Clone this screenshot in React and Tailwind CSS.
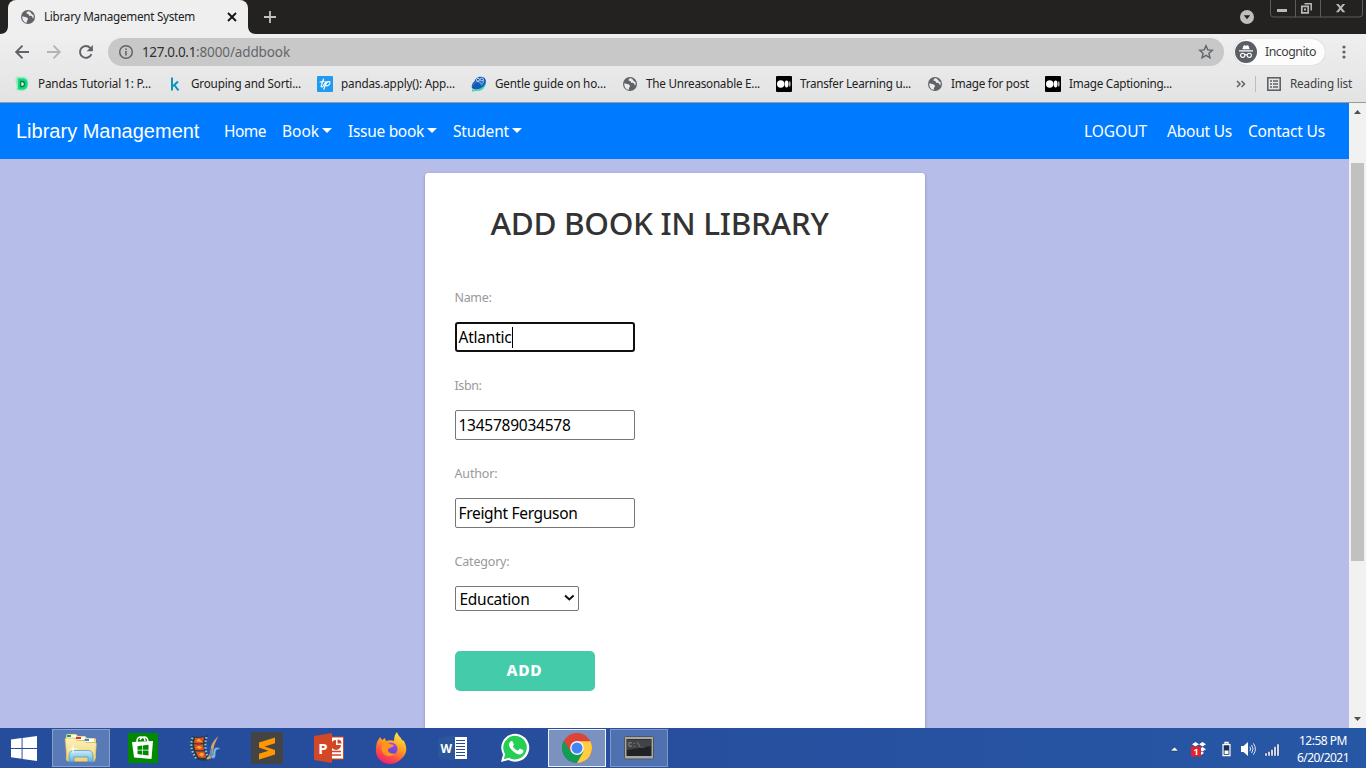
import React, { useLayoutEffect, useRef } from "react";

/* A single line of text whose tracking is tuned so that it fills a given width. */
function Fit({ w, children, className = "" }) {
  const box = useRef(null);
  useLayoutEffect(() => {
    const el = box.current;
    el.style.letterSpacing = "0px";
    const natural = el.getBoundingClientRect().width;
    el.style.letterSpacing = `${(w - natural) / String(children).length}px`;
  }, [w, children]);
  return (
    <span ref={box} className={`inline-block shrink-0 whitespace-nowrap ${className}`}>
      {children}
    </span>
  );
}

function Globe() {
  return (
    <svg width="16" height="16" viewBox="0 0 16 16" className="shrink-0">
      <circle cx="8" cy="8" r="7" fill="#5f6368" />
      <path d="M2.300 7.200 6 8.200c1.400.3 2 1 1.900 2-.1.900-.900 1-1 2l-.1 1.600C4 13.500 2 11 2.300 7.200Z" fill="#ececec" />
      <path d="M8.600 2.200c-1.600.4-2.300 1.200-2.100 2 .2.800 1.300.5 2 1 .6.500.2 1.200.9 1.600.8.400 1.700 0 2.400.5.800.6.500 1.800 1.400 2.200.5-1 .6-2.300.2-3.500l-1.600-.7-.6-1.400c-.6-.7-1.600-1.500-2.600-1.700Z" fill="#ececec" />
    </svg>
  );
}

function MediumIcon() {
  return (
    <svg width="16" height="16" viewBox="0 0 16 16" className="shrink-0">
      <rect width="16" height="16" rx="1" fill="#000" />
      <circle cx="4.700" cy="8" r="3.700" fill="#fff" />
      <ellipse cx="10.600" cy="8" rx="1.900" ry="3.400" fill="#fff" />
      <ellipse cx="13.800" cy="8" rx="0.800" ry="3" fill="#bbb" />
    </svg>
  );
}

function DatacampIcon() {
  return (
    <svg width="16" height="16" viewBox="0 0 16 16" className="shrink-0">
      <path d="M2 .8h7c4 0 5.700 3 5.300 7.500-.4 4.500-3 6.700-6.800 6.700L1.600 13.800 3 12 1.300 3.200 3 2.500Z" fill="#8eeabb" />
      <path d="M4 2.500h4.500c3.400 0 5 2.200 5 5.500s-1.600 5.500-5 5.500H4Z" fill="#10d67e" />
      <path d="M6.700 5.500h1.500c1.500 0 2.200.9 2.200 2.500s-.7 2.500-2.200 2.500H6.700Z" fill="#d9ffee" stroke="#0a7a4a" strokeWidth="1.300" />
    </svg>
  );
}

function KIcon() {
  return (
    <svg width="16" height="16" viewBox="0 0 16 16" className="shrink-0" fill="none" stroke="#1093bd" strokeWidth="2">
      <path d="M5 1.500v13M11 5.500 6 10.300M7.300 9l4.200 5.300" />
    </svg>
  );
}

function TpIcon() {
  return (
    <svg width="16" height="16" viewBox="0 0 16 16" className="shrink-0">
      <rect width="16" height="16" rx="1" fill="#1e9bf0" />
      <g fill="none" stroke="#fff" strokeWidth="1.100" strokeLinecap="round">
        <path d="M6.500 3 4.300 9.500c-.5 1.800.6 2 2 .4L9 5.500M3 6l4-.6" />
        <path d="M9.300 6 6.800 13.300M8.700 8.500c1-3 4.300-4 4.300-1.900 0 2-2.500 4-4.500 3" />
      </g>
    </svg>
  );
}

function BookGuideIcon() {
  return (
    <svg width="16" height="16" viewBox="0 0 16 16" className="shrink-0">
      <path d="M1 13c3 2 10 1 14-8 .5 6-4 10.500-8.500 9.800L1 15.600Z" fill="#2fdcb0" />
      <path d="M.8 11.500C.2 8.500 2.600 6 4 4.500c.5-3 5.500-5 9-3 2.500 2 2.500 5 0 8.200C9.500 13.500 3 15 .8 11.500Z" fill="#1359b5" />
      <path d="M1.500 9.500 5 5.500c2.500 0 5 2 5.500 4.500" fill="none" stroke="#3d86d6" strokeWidth="1" />
      <path d="M5.500 5.500c2-.5 4.500 1 5.500 3 1.500-1.500 2-3.500 1-5.500" fill="none" stroke="#8abdeb" strokeWidth="1" />
      <circle cx="7" cy="3.700" r="1.500" fill="#1359b5" stroke="#d5e8fa" strokeWidth=".9" />
      <circle cx="10.800" cy="3.500" r="1.500" fill="#1359b5" stroke="#d5e8fa" strokeWidth=".9" />
    </svg>
  );
}

const bookmarks = [
  { icon: DatacampIcon, label: "Pandas Tutorial 1: P...", w: 113 },
  { icon: KIcon, label: "Grouping and Sorti...", w: 110 },
  { icon: TpIcon, label: "pandas.apply(): App...", w: 114 },
  { icon: BookGuideIcon, label: "Gentle guide on ho...", w: 111 },
  { icon: Globe, label: "The Unreasonable E...", w: 114 },
  { icon: MediumIcon, label: "Transfer Learning u...", w: 111 },
  { icon: Globe, label: "Image for post", w: 78 },
  { icon: MediumIcon, label: "Image Captioning...", w: 103 },
];

function TabStrip() {
  return (
    <div className="flex h-[34px] shrink-0 items-start bg-[#242220]">
      <svg width="8" height="34" viewBox="0 0 8 34" className="shrink-0">
        <path d="M8 26v8H0c5 0 8-3 8-8Z" fill="#efefef" />
      </svg>
      <div className="flex h-[34px] w-[240px] items-center rounded-t-lg bg-[#efefef] pl-3">
        <Globe />
        <Fit w={151} className="ml-2 text-[11.700px] text-[#202124]">Library Management System</Fit>
        <svg width="10" height="10" viewBox="0 0 10 10" className="ml-8" stroke="#111" strokeWidth="1.800">
          <path d="m1 1 8 8M9 1 1 9" />
        </svg>
      </div>
      <svg width="8" height="34" viewBox="0 0 8 34" className="shrink-0">
        <path d="M0 26v8h8c-5 0-8-3-8-8Z" fill="#efefef" />
      </svg>
      <svg width="12" height="12" viewBox="0 0 12 12" className="ml-2 mt-[11px]" stroke="#c2c2c2" strokeWidth="1.800">
        <path d="M6 0v12M0 6h12" />
      </svg>
      <svg width="14" height="14" viewBox="0 0 14 14" className="ml-auto mt-[10px]">
        <circle cx="7" cy="7" r="7" fill="#bdbec0" />
        <path d="M3.800 5.300h6.400L7 9.300Z" fill="#242220" />
      </svg>
      <svg width="94" height="19" viewBox="0 0 94 19" className="ml-4 mr-[2px]">
        <path d="M.5 0v14q0 3 3 3h86q3 0 3-3V0M25.500 0v17M50.500 0v17" fill="none" stroke="#5d5c5a" />
        <path d="M7 9h10v3H7Z" fill="#b9b9b9" />
        <g fill="none" stroke="#b9b9b9">
          <path d="M34.500 3.800h6.700v6.700" strokeWidth="1.500" />
          <path d="M31.800 6.300h6.400v6.500h-6.400Z" strokeWidth="1.700" />
        </g>
        <path d="M34 8.500h2v2h-2Z" fill="#b9b9b9" />
        <path d="M66 4h2.600l2 2.400 2-2.400h2.600l-3.300 4 3.400 4.300h-2.700l-2-2.600-2 2.600h-2.700L69.300 8Z" fill="#b9b9b9" />
      </svg>
    </div>
  );
}

function Toolbar() {
  return (
    <div className="flex h-9 shrink-0 items-center pl-[14px]">
      <svg width="16" height="16" viewBox="0 0 16 16" fill="none" stroke="#5f6368" strokeWidth="1.900">
        <path d="M15 8H2.500M8.500 1.700 2.200 8l6.300 6.300" />
      </svg>
      <svg width="16" height="16" viewBox="0 0 16 16" fill="none" stroke="#b3b5b7" strokeWidth="1.900" className="ml-4">
        <path d="M1 8h12.500M7.500 1.700 13.800 8l-6.300 6.300" />
      </svg>
      <svg width="16" height="16" viewBox="0 0 16 16" className="ml-4">
        <path d="M13.400 10.100A5.900 5.900 0 1 1 12.300 4" fill="none" stroke="#5f6368" strokeWidth="1.900" />
        <path d="M14.900 1v6.300H8.600Z" fill="#5f6368" />
      </svg>
      <div className="ml-[14px] flex h-7 w-[1116px] items-center rounded-full bg-[#c8c8c8] pl-[10px] pr-[10px]">
        <svg width="16" height="16" viewBox="0 0 16 16" fill="none" stroke="#5f6368" strokeWidth="1.500">
          <circle cx="8" cy="8" r="6.300" />
          <path d="M8 7.100v4.400M8 4.400v1.700" strokeWidth="1.600" />
        </svg>
        <span className="ml-2 text-[13.500px] text-[#303134]"><Fit w={54}>127.0.0.1</Fit></span>
        <Fit w={94} className="text-[13.500px] text-[#63666a]">:8000/addbook</Fit>
        <svg width="16" height="16" viewBox="0 0 16 16" className="ml-auto" fill="none" stroke="#5f6368" strokeWidth="1.400">
          <path d="m8 1.700 1.800 4.200 4.600.4-3.500 3 1.100 4.500L8 11.400l-4 2.400 1.100-4.500-3.500-3 4.600-.4Z" />
        </svg>
      </div>
      <div className="ml-[10px] flex h-[26px] w-[91px] items-center rounded-full bg-[#fcfcfc] pl-px shadow-[0_0_1px_#aaa]">
        <svg width="22" height="22" viewBox="0 0 22 22">
          <circle cx="11" cy="11" r="11" fill="#5b5e64" />
          <path d="m7.300 8.300 1.200-3.600q.3-.6 1-.4l1.500.4 1.500-.4q.7-.2 1 .4l1.200 3.600ZM4 9.300h14v1.100H4Z" fill="#fff" />
          <g fill="none" stroke="#fff" strokeWidth="1.100">
            <circle cx="7.700" cy="14.300" r="2.100" />
            <circle cx="14.300" cy="14.300" r="2.100" />
            <path d="M9.800 14q1.200-.8 2.400 0" />
          </g>
        </svg>
        <Fit w={51} className="ml-2 text-[12.300px] text-[#3c4043]">Incognito</Fit>
      </div>
      <svg width="4" height="14" viewBox="0 0 4 14" className="ml-[17px]" fill="#5f6368">
        <circle cx="2" cy="2" r="1.600" />
        <circle cx="2" cy="7" r="1.600" />
        <circle cx="2" cy="12" r="1.600" />
      </svg>
    </div>
  );
}

function BookmarksBar() {
  return (
    <div className="flex h-[33px] shrink-0 items-center gap-4 border-b border-[#999] pb-[4px] pl-[14px] text-[11.700px] text-[#222]">
      {bookmarks.map(({ icon: Icon, label, w }) => (
        <div key={label} className="flex items-center gap-2">
          <Icon />
          <Fit w={w}>{label}</Fit>
        </div>
      ))}
      <div className="ml-12 flex items-center">
        <svg width="10" height="8" viewBox="0 0 10 8" fill="none" stroke="#5f6368" strokeWidth="1.500">
          <path d="m1 1 3 3-3 3M5.500 1l3 3-3 3" />
        </svg>
        <div className="ml-[9px] h-4 w-px bg-[#bdbdbd]" />
        <svg width="14" height="14" viewBox="0 0 14 14" className="ml-[11px]">
          <rect x=".8" y=".8" width="12.400" height="12.400" fill="none" stroke="#5f6368" strokeWidth="1.600" />
          <path d="M3 4h2M6 4h5M3 7h2M6 7h5M3 10h2M6 10h5" stroke="#5f6368" strokeWidth="1.500" />
        </svg>
        <Fit w={62} className="ml-[9px] text-[#3c4043]">Reading list</Fit>
      </div>
    </div>
  );
}

function Caret() {
  return (
    <svg width="10" height="5" viewBox="0 0 10 5" className="mb-[3px] ml-[3px]">
      <path d="M0 0h10L5 5Z" fill="#fff" />
    </svg>
  );
}

function SiteNav() {
  return (
    <nav className="flex h-14 items-center bg-[#007bff] pl-4 pr-6 pt-px text-[15.500px] text-white">
      <span className="w-[184px] whitespace-nowrap pb-px font-['Liberation_Sans',sans-serif] text-xl">Library Management</span>
      <Fit w={42} className="ml-6">Home</Fit>
      <div className="ml-4 flex items-center"><Fit w={37}>Book</Fit><Caret /></div>
      <div className="ml-4 flex items-center"><Fit w={76}>Issue book</Fit><Caret /></div>
      <div className="ml-4 flex items-center"><Fit w={56}>Student</Fit><Caret /></div>
      <Fit w={63} className="ml-auto">LOGOUT</Fit>
      <Fit w={65} className="ml-5">About Us</Fit>
      <Fit w={77} className="ml-4">Contact Us</Fit>
    </nav>
  );
}

function Field({ label, labelWidth, value, valueWidth, focused }) {
  return (
    <div className="h-[88px]">
      <div className="flex h-[27px] items-center text-[12.500px] text-[#999]"><Fit w={labelWidth}>{label}</Fit></div>
      <div
        className={
          focused
            ? "mt-[10px] flex h-[30px] w-[180px] items-center rounded-[3px] border-2 border-[#101010] pl-[2px] text-[15.500px] text-black"
            : "mt-[10px] flex h-[30px] w-[180px] items-center rounded-[2px] border border-[#767676] pl-[3px] text-[15.500px] text-black"
        }
      >
        <Fit w={valueWidth} className="pt-[2px]">{value}</Fit>
        {focused && <div className="h-[21px] w-px bg-black" />}
      </div>
    </div>
  );
}

function BookForm() {
  return (
    <div className="mx-auto mt-[14px] h-[555px] w-[500px] rounded-t-[3px] bg-white px-[30px] shadow-[0_1px_3px_rgba(0,0,0,0.3)]">
      <div className="flex h-[99px] items-center pl-9 text-[31.500px] font-medium text-[#333]">
        <Fit w={338}>ADD BOOK IN LIBRARY</Fit>
      </div>
      <div className="pt-[13px]">
        <Field label="Name:" labelWidth={37} value="Atlantic" valueWidth={53} focused />
        <Field label="Isbn:" labelWidth={27} value="1345789034578" valueWidth={112} />
        <Field label="Author:" labelWidth={43} value="Freight Ferguson" valueWidth={119} />
        <div className="flex h-[27px] items-center text-[12.500px] text-[#999]"><Fit w={55}>Category:</Fit></div>
        <div className="mt-[10px] flex h-[25px] w-[124px] items-center rounded-[2px] border border-[#767676] pl-[4px] pr-[3px] text-[15.500px] text-black">
          <Fit w={70} className="pt-[3px]">Education</Fit>
          <svg width="11" height="8" viewBox="0 0 11 8" className="mb-[1px] ml-auto" fill="none" stroke="#111" strokeWidth="2">
            <path d="m1 1.500 4.300 4 4.300-4" />
          </svg>
        </div>
      </div>
      <button className="mt-10 flex h-10 w-[140px] items-center justify-center rounded-[5px] bg-[#43cbaa] text-[15.500px] font-extrabold text-white">
        <Fit w={36}>ADD</Fit>
      </button>
    </div>
  );
}

function Scrollbar() {
  return (
    <div className="flex w-[17px] shrink-0 flex-col items-center bg-[#f1f1f1]">
      <svg width="17" height="17" viewBox="0 0 17 17"><path d="M5 11h7L8.500 7Z" fill="#505050" /></svg>
      <div className="mt-[43px] h-[398px] w-[13px] bg-[#c1c1c1]" />
      <svg width="17" height="17" viewBox="0 0 17 17" className="mt-auto"><path d="M5 6h7l-3.500 4Z" fill="#505050" /></svg>
    </div>
  );
}

function ExplorerIcon() {
  return (
    <svg width="34" height="32" viewBox="0 0 34 32">
      <defs>
        <linearGradient id="folder" x1="0" y1="0" x2="0" y2="1"><stop offset="0" stopColor="#fff1b8" /><stop offset="1" stopColor="#ecd27c" /></linearGradient>
        <linearGradient id="stand" x1="0" y1="0" x2="0" y2="1"><stop offset="0" stopColor="#cbeefa" /><stop offset="1" stopColor="#5fb1dc" /></linearGradient>
      </defs>
      <path d="M2 27V4q0-2 2-2h8l2 2h7l2 2h7q2 0 2 2v18l-3 3H3Z" fill="#f1d98c" />
      <path d="M3 3h9v3H3Z" fill="#fff" /><path d="M3 3h4v2H3Z" fill="#14a34b" />
      <path d="M12 5h9v3h-9Z" fill="#fff" /><path d="M12 5h5v2h-5Z" fill="#d33a2b" />
      <path d="M20 7h10v3H20Z" fill="#fff" /><path d="M20.500 7h4.500v2h-4.500Z" fill="#2c8ede" />
      <path d="M1 7q0-1 1-1h9l2 2.500h7l2 2h9q1.500 0 1.500 1.500L31 28q0 1.500-1.500 1.500h-25Q3 29.500 3 28Z" fill="url(#folder)" stroke="#c9a94b" strokeWidth=".6" />
      <path d="M5 30v-6q0-5.500 5-5.500h14q5 0 5 5.500v6h-5v-5H10v5Z" fill="url(#stand)" stroke="#4b97bf" strokeWidth=".7" />
      <path d="m9 12 .8 4.200L14 17l-4.200.8L9 22l-.8-4.200L4 17l4.200-.8Z" fill="#fff" />
    </svg>
  );
}

function StoreIcon() {
  return (
    <svg width="30" height="30" viewBox="0 0 30 30">
      <rect width="30" height="30" fill="#008a00" />
      <path d="M9 12V8q0-4 4-4t4 4M12 7q1-3 4-3 4 0 4 5" fill="none" stroke="#fff" strokeWidth="1.500" />
      <path d="m4 9 21-1-1.500 18L6 24.500Z" fill="#fff" />
      <path d="m9.500 13.200 4.500-.6v4.200H9.500Zm5.200-.7 5.800-.8v5.100h-5.800Zm-5.200 5h4.500v4.200l-4.500-.6Zm5.200 0h5.800v5l-5.800-.7Z" fill="#008a00" />
    </svg>
  );
}

function MovieIcon() {
  return (
    <svg width="32" height="28" viewBox="0 0 32 28">
      <path d="M2.500 2C9 3.500 14 3 19 1c-3 8-2.500 17 2 25-5 1-10 1-15-1C1 17 0 9 2.500 2Z" fill="#25384c" />
      <path d="M3.500 3.500C1 11 2.500 17 7 24.500" fill="none" stroke="#7fbde8" strokeWidth="2.200" strokeDasharray="1.800 1.600" />
      <path d="M17.500 3c-2 8-1.500 15 2.500 22" fill="none" stroke="#7fbde8" strokeWidth="2.200" strokeDasharray="1.800 1.600" />
      <path d="M6 3.700q4.500.6 9-.4L14 9q-4.500.8-9 0Zm-1 6.500q4.500.8 9 0L14.800 16q-4.300.8-8.800-.3Zm1.500 7q4.500.8 8.700 0l2 6.300q-4 1-8-.5Z" fill="#e9501b" />
      <path d="m7 7 3-2.500L13 8Zm0 6.500 3-1.500 3 1-2 2Zm2.500 7L13 18.500l2 2-2 2Z" fill="#ffb030" />
      <path d="M17 25c4 1.500 7-1.500 7.500-8C24.500 10 28 6.500 29 2c-3 4-7 7-7.500 14-.2 4-1.500 7-4.500 9Z" fill="#d4a763" />
      <path d="M21.500 15c-1.500 7 1.500 11 4 9 2-2 .5-6 2-8 1-1.200 2-.8 3.500-.5-.5-3-5.500-3-6.500.8-.7 3-.4 5-1.300 5.200-1 0-1.300-3-.2-6.500Z" fill="#80b8e8" stroke="#2d62a5" strokeWidth=".6" />
    </svg>
  );
}

function PowerPointIcon() {
  return (
    <svg width="30" height="30" viewBox="0 0 30 30">
      <path d="M17 4h12.500v22H17Z" fill="#fff" stroke="#d24726" />
      <path d="M22 7v5h5a5 5 0 1 1-5-5Z" fill="#d24726" />
      <path d="M23.500 6.500q4 0 4 4h-4Z" fill="#d24726" />
      <path d="M17 18.500h10M17 22h10" stroke="#d24726" strokeWidth="1.500" />
      <path d="m0 3 18-3v30L0 27Z" fill="#d24726" />
      <text x="4.300" y="20.500" fill="#fff" fontSize="15" fontWeight="700" fontFamily="Noto Sans, sans-serif">P</text>
    </svg>
  );
}

function FirefoxIcon() {
  return (
    <svg width="32" height="32" viewBox="0 0 32 32">
      <defs>
        <linearGradient id="fox" x1=".8" y1="0" x2=".3" y2="1"><stop offset="0" stopColor="#fff04a" /><stop offset=".45" stopColor="#ff9a1f" /><stop offset=".75" stopColor="#ff4b4a" /><stop offset="1" stopColor="#ed2171" /></linearGradient>
        <linearGradient id="orb" x1="0" y1="0" x2="0" y2="1"><stop offset="0" stopColor="#a948e6" /><stop offset="1" stopColor="#5447d7" /></linearGradient>
      </defs>
      <path d="M2 10 5 5l2 3 3-2 1 3c3-1 6-1 8 0 0-4 1-7 3-9 1 4 4 5 5 8l2 1c3 6 3 11 0 15C20 36 6 33 2 24 0 19 1 14 2 10Z" fill="url(#fox)" />
      <circle cx="16" cy="17" r="6.500" fill="url(#orb)" />
      <path d="M5 12c4-2 7-2 10 0l4 1c-1 3-4 2-6 4-1 3 4 6 8 4-4 5-12 4-14-2-1-3 0-5 1-6Z" fill="#ff941f" />
    </svg>
  );
}

function WordIcon() {
  return (
    <svg width="30" height="28" viewBox="0 0 30 28">
      <path d="m0 4 18-3v26L0 24Z" fill="#2b579a" />
      <path d="M17 3h12v22H17Z" fill="#fff" />
      <path d="M18 6.500h9M18 9.500h9M18 12.500h9M18 15.500h9M18 18.500h9M18 21.500h9" stroke="#264d94" strokeWidth="1.100" />
      <text x="2.500" y="18.500" fill="#fff" fontSize="13" fontWeight="700" fontFamily="Noto Sans, sans-serif" textLength="11.500" lengthAdjust="spacingAndGlyphs">W</text>
    </svg>
  );
}

function WhatsAppIcon() {
  return (
    <svg width="30" height="30" viewBox="0 0 30 30">
      <path d="m1 29 2-7.500A14 14 0 1 1 8.500 27Z" fill="#fff" />
      <path d="m3.800 26.200 1.400-5A11.800 11.800 0 1 1 9 24.800Z" fill="#25cf54" />
      <path d="M10.500 8.500c1-.9 2-.5 2.400.5l.9 2.200c.2.700-.2 1.200-1 2 1.500 2.500 2.800 3.600 5 4.500l1.500-1.700c.5-.5 1-.4 1.600-.1l2.200 1.200c1 .7-.2 3.300-1.500 3.900-2 1-5.200 0-8-2.200-3-2.500-4.800-5.400-4.700-7.500q.1-1.700 1.600-2.800Z" fill="#fff" />
    </svg>
  );
}

function ChromeIcon() {
  return (
    <svg width="30" height="30" viewBox="0 0 30 30">
      <circle cx="15" cy="15" r="15" fill="#db4437" />
      <path d="M2 7.500A15 15 0 0 0 15 30l6.500-11.300L8.500 18.800Z" fill="#0f9d58" />
      <path d="M15 8.300h13.400A15 15 0 0 1 15 30l6.500-11.300Z" fill="#ffcd40" />
      <circle cx="15" cy="15" r="6.900" fill="#f6f6f6" />
      <circle cx="15" cy="15" r="5.500" fill="#4285f4" />
    </svg>
  );
}

function TerminalIcon() {
  return (
    <svg width="30" height="24" viewBox="0 0 30 24">
      <rect x=".5" y=".5" width="29" height="22.500" rx="1" fill="#a7a7a7" stroke="#555" />
      <rect x="2.500" y="3" width="25" height="17" fill="#202326" />
      <path d="M3 3.500h24V10L3 14Z" fill="#414447" />
      <text x="4" y="10.500" fontSize="7" fontWeight="700" fill="#858585" fontFamily="Liberation Mono, monospace">C:\_</text>
      <path d="M24 21.500h2" stroke="#3fc0ff" />
    </svg>
  );
}

function SublimeIcon() {
  return (
    <svg width="32" height="32" viewBox="0 0 32 32">
      <rect width="32" height="32" rx="1.500" fill="#444" />
      <path d="m8 10.500 16-5v5.700L13.500 14.500 24 18v4.500L8 27.500v-5.700l9.500-3L8 15.500Z" fill="#ff9800" />
    </svg>
  );
}

const apps = [
  { id: "explorer", Icon: ExplorerIcon, frame: "border border-[#8aa0cb] bg-[#587ab7]" },
  { id: "store", Icon: StoreIcon, frame: "" },
  { id: "movie", Icon: MovieIcon, frame: "" },
  { id: "sublime", Icon: SublimeIcon, frame: "" },
  { id: "powerpoint", Icon: PowerPointIcon, frame: "" },
  { id: "firefox", Icon: FirefoxIcon, frame: "" },
  { id: "word", Icon: WordIcon, frame: "" },
  { id: "whatsapp", Icon: WhatsAppIcon, frame: "" },
  { id: "chrome", Icon: ChromeIcon, frame: "border border-[#eef2f8] bg-[#7b91bf]" },
  { id: "terminal", Icon: TerminalIcon, frame: "border border-[#7f98c8] bg-[#4f71b0]" },
];

function Tray() {
  return (
    <div className="ml-auto flex items-center pr-[17px] pt-[2px] text-white">
      <svg width="9" height="6" viewBox="0 0 9 6"><path d="M.5 5 4.500 1l4 4Z" fill="#fff" stroke="#14305f" strokeWidth=".6" /></svg>
      <svg width="16" height="16" viewBox="0 0 16 16" className="ml-[12px]">
        <path d="m4.500 1 3.500 2.300L4.500 5.500 1 3.300Zm7 0L15 3.300l-3.500 2.200L8 3.300Zm0 5L15 8.200l-3.500 2.300L8 8.200Zm-3.500 6 3 -1.500 2 1.500-3 2Z" fill="#fff" />
        <rect y="5.500" width="10" height="10" fill="#e8202a" />
        <text x="2.500" y="14" fontSize="9" fontWeight="700" fill="#fff" fontFamily="Noto Sans, sans-serif">1</text>
      </svg>
      <svg width="11" height="16" viewBox="0 0 11 16" className="ml-[14px]">
        <rect x="1" y="2" width="9" height="13" rx="1" fill="#14305f" />
        <path d="M2 3.500h7v11H2ZM4 1.500h3v2H4Z" fill="none" stroke="#fff" strokeWidth="1.300" />
        <path d="M3.500 9.500h4v3.500h-4Z" fill="#fff" />
      </svg>
      <svg width="16" height="16" viewBox="0 0 16 16" className="ml-[8px]">
        <path d="M1 5h2.500L8 1v14l-4.500-4H1Z" fill="#fff" />
        <path d="M9.800 5.800q1.700 2.200 0 4.400M11.600 4q3 4 0 8M13.300 2.300q4.200 5.700 0 11.400" fill="none" stroke="#dce5f3" />
      </svg>
      <svg width="16" height="13" viewBox="0 0 16 13" className="ml-2">
        <path d="M1 10h2v3H1Zm3-1.500h2V13H4Zm3-2h2V13H7Zm3-3h2V13h-2ZM13 1h2v12h-2Z" fill="#fff" stroke="#14305f" strokeWidth=".4" />
      </svg>
      <div className="ml-[17px] flex flex-col items-center text-[12px] leading-[17px]">
        <Fit w={48}>12:58 PM</Fit>
        <Fit w={52}>6/20/2021</Fit>
      </div>
    </div>
  );
}

function Taskbar() {
  return (
    <div className="flex h-10 shrink-0 items-center bg-linear-to-r from-[#264c9c] via-[#274f9e] to-[#2657a5]">
      <div className="flex w-[50px] justify-center pr-[2px]">
        <svg width="26" height="25" viewBox="0 0 27 26" fill="#fff">
          <path d="m0 3.700 11-1.500v10.200H0Zm12-1.600L27 0v12.400H12ZM0 13.400h11v10.300L0 22.200Zm12 0h15V26l-15-2.100Z" />
        </svg>
      </div>
      {apps.map(({ id, Icon, frame }) => (
        <div key={id} className="flex h-10 w-[62px] items-center justify-center">
          <div className={`flex h-[38px] w-[58px] items-center justify-center ${frame}`}><Icon /></div>
        </div>
      ))}
      <Tray />
    </div>
  );
}

export default function App() {
  return (
    <div className="flex h-[768px] w-[1366px] flex-col overflow-hidden font-['Noto_Sans',sans-serif]">
      <TabStrip />
      <div className="flex shrink-0 flex-col bg-linear-to-b from-[#efefef] to-[#e3e3e3]">
        <Toolbar />
        <BookmarksBar />
      </div>
      <div className="flex h-[625px] shrink-0">
        <main className="w-[1349px] overflow-hidden bg-[#b6bde8]">
          <SiteNav />
          <BookForm />
        </main>
        <Scrollbar />
      </div>
      <Taskbar />
    </div>
  );
}
